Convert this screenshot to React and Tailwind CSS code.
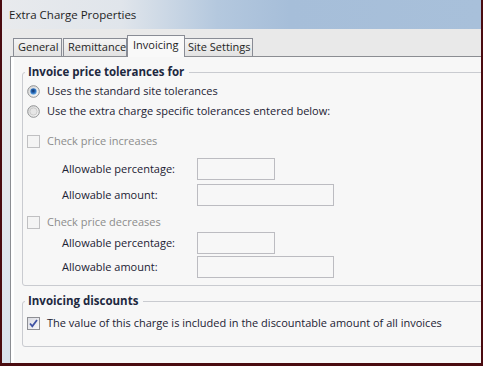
import React from 'react';

// Small radio drawn as svg so it keeps the classic look
const Radio = ({ checked }) => (
  <svg width="13" height="13" viewBox="0 0 13 13" className="shrink-0">
    <defs>
      <linearGradient id={checked ? 'radOn' : 'radOff'} x1="0" y1="0" x2="1" y2="1">
        <stop offset="0" stopColor="#d2d2d2" />
        <stop offset="1" stopColor="#fcfcfc" />
      </linearGradient>
      <radialGradient id="radDot" cx="0.45" cy="0.4" r="0.65">
        <stop offset="0" stopColor="#0e2f63" />
        <stop offset="0.55" stopColor="#2a6fc0" />
        <stop offset="1" stopColor="#8cc6f0" />
      </radialGradient>
    </defs>
    <circle cx="6.5" cy="6.5" r="5.8" fill={checked ? 'url(#radOn)' : 'url(#radOff)'} stroke="#8f9193" strokeWidth="1" />
    {checked ? (
      <circle cx="6.5" cy="6.5" r="3.2" fill="url(#radDot)" />
    ) : (
      <circle cx="6.5" cy="6.5" r="3.6" fill="#e6e6e6" stroke="#c4c4c4" strokeWidth="0.8" />
    )}
  </svg>
);

const Check = ({ checked }) =>
  checked ? (
    <span className="w-[13px] h-[13px] shrink-0 border border-[#8e8f94] bg-gradient-to-br from-[#dcdde3] to-[#f7f7f9] flex items-center justify-center">
      <svg width="11" height="11" viewBox="0 0 11 11">
        <path d="M2 5.5 L4.3 8.3 L9 2" fill="none" stroke="#3f52a3" strokeWidth="1.8" />
      </svg>
    </span>
  ) : (
    <span className="w-[13px] h-[13px] shrink-0 border border-[#c0c0c2] bg-[#f4f4f4]"></span>
  );

const Field = ({ label, wide }) => (
  <div className="flex items-center pl-[39px]">
    <span className="w-[135px] text-[#1b2233]">{label}</span>
    <span
      className={
        wide
          ? 'w-[137px] h-[22px] border border-[#bcbcc1] bg-[#f7f7f7]'
          : 'w-[78px] h-[22px] border border-[#bcbcc1] bg-[#f7f7f7]'
      }
    ></span>
  </div>
);

export default function App() {
  return (
    <div className="w-[483px] h-[366px] overflow-hidden bg-[#4a0b10] pl-[2px] pr-[2px] pb-[3px] flex flex-col font-['Open_Sans',sans-serif] text-[11px] text-[#1b2233]">
      {/* title bar */}
      <div className="h-[29px] shrink-0 flex items-center pl-[7px] pt-[1px] text-[11.5px] text-[#1e1e1e] bg-[linear-gradient(to_right,#e8eaed_0%,#e0e5eb_25%,#b4c8de_45%,#a6bed9_60%,#a8c0da_100%)]">
        Extra Charge Properties
      </div>

      <div className="flex-1 flex min-h-0">
        <div className="w-[8px] shrink-0 bg-gradient-to-b from-[#ebebeb] to-[#d9e2ed]"></div>

        <div className="flex-1 flex flex-col min-w-0 bg-[#e9e9e9]">
          {/* tabs */}
          <div className="h-[27px] shrink-0 flex items-end pl-[3px] text-[#1e1e1e]">
            <div className="w-[49px] h-[18px] border border-b-0 border-[#898c95] bg-gradient-to-b from-[#f4f4f4] to-[#e2e2e2] flex items-center pl-[4px]">
              General
            </div>
            <div className="ml-[1px] w-[64px] h-[18px] border border-b-0 border-[#898c95] bg-gradient-to-b from-[#f4f4f4] to-[#e2e2e2] flex items-center pl-[4px]">
              Remittance
            </div>
            <div className="relative z-10 -mb-px w-[58px] h-[22px] border border-b-0 border-[#898c95] bg-[#f9f9f9] flex items-center pl-[5px] pb-[2px]">
              Invoicing
            </div>
            <div className="w-[68px] h-[18px] border border-l-0 border-b-0 border-[#898c95] bg-gradient-to-b from-[#f4f4f4] to-[#e2e2e2] flex items-center pl-[3px]">
              Site Settings
            </div>
          </div>

          {/* tab page */}
          <div className="flex-1 min-h-0 overflow-hidden bg-[#f7f7f7] border-t border-l border-[#8b8d92] shadow-[inset_3px_0_0_#ffffff] pl-[11px] pt-[7px]">
            <fieldset className="w-[500px] border border-[#c9cbd0] rounded-[3px] pb-[7px]">
              <legend className="ml-[2px] pl-[3px] pr-[5px] font-bold text-[11.5px] leading-[16px] text-[#1d2840]">
                Invoice price tolerances for
              </legend>
              <div className="mt-[1px] h-[20px] flex items-center gap-[7px] pl-[4px]">
                <Radio checked />
                <span>Uses the standard site tolerances</span>
              </div>
              <div className="h-[20px] flex items-center gap-[7px] pl-[4px]">
                <Radio />
                <span>Use the extra charge specific tolerances entered below:</span>
              </div>

              <div className="mt-[10px] h-[20px] flex items-center gap-[7px] pl-[4px] text-[#8c8c8c]">
                <Check />
                <span>Check price increases</span>
              </div>
              <div className="mt-[7px]">
                <Field label="Allowable percentage:" />
              </div>
              <div className="mt-[4px]">
                <Field label="Allowable amount:" wide />
              </div>

              <div className="mt-[6px] h-[20px] flex items-center gap-[7px] pl-[4px] text-[#8c8c8c]">
                <Check />
                <span>Check price decreases</span>
              </div>
              <div>
                <Field label="Allowable percentage:" />
              </div>
              <div className="mt-[2px]">
                <Field label="Allowable amount:" wide />
              </div>
            </fieldset>

            <fieldset className="mt-[7px] w-[500px] border border-[#c9cbd0] rounded-[3px] pb-[13px]">
              <legend className="ml-[2px] pl-[3px] pr-[5px] font-bold text-[11.5px] leading-[16px] text-[#1d2840]">
                Invoicing discounts
              </legend>
              <div className="mt-[4px] h-[20px] flex items-center gap-[7px] pl-[4px]">
                <Check checked />
                <span>The value of this charge is included in the discountable amount of all invoices</span>
              </div>
            </fieldset>
          </div>
        </div>
      </div>
    </div>
  );
}
